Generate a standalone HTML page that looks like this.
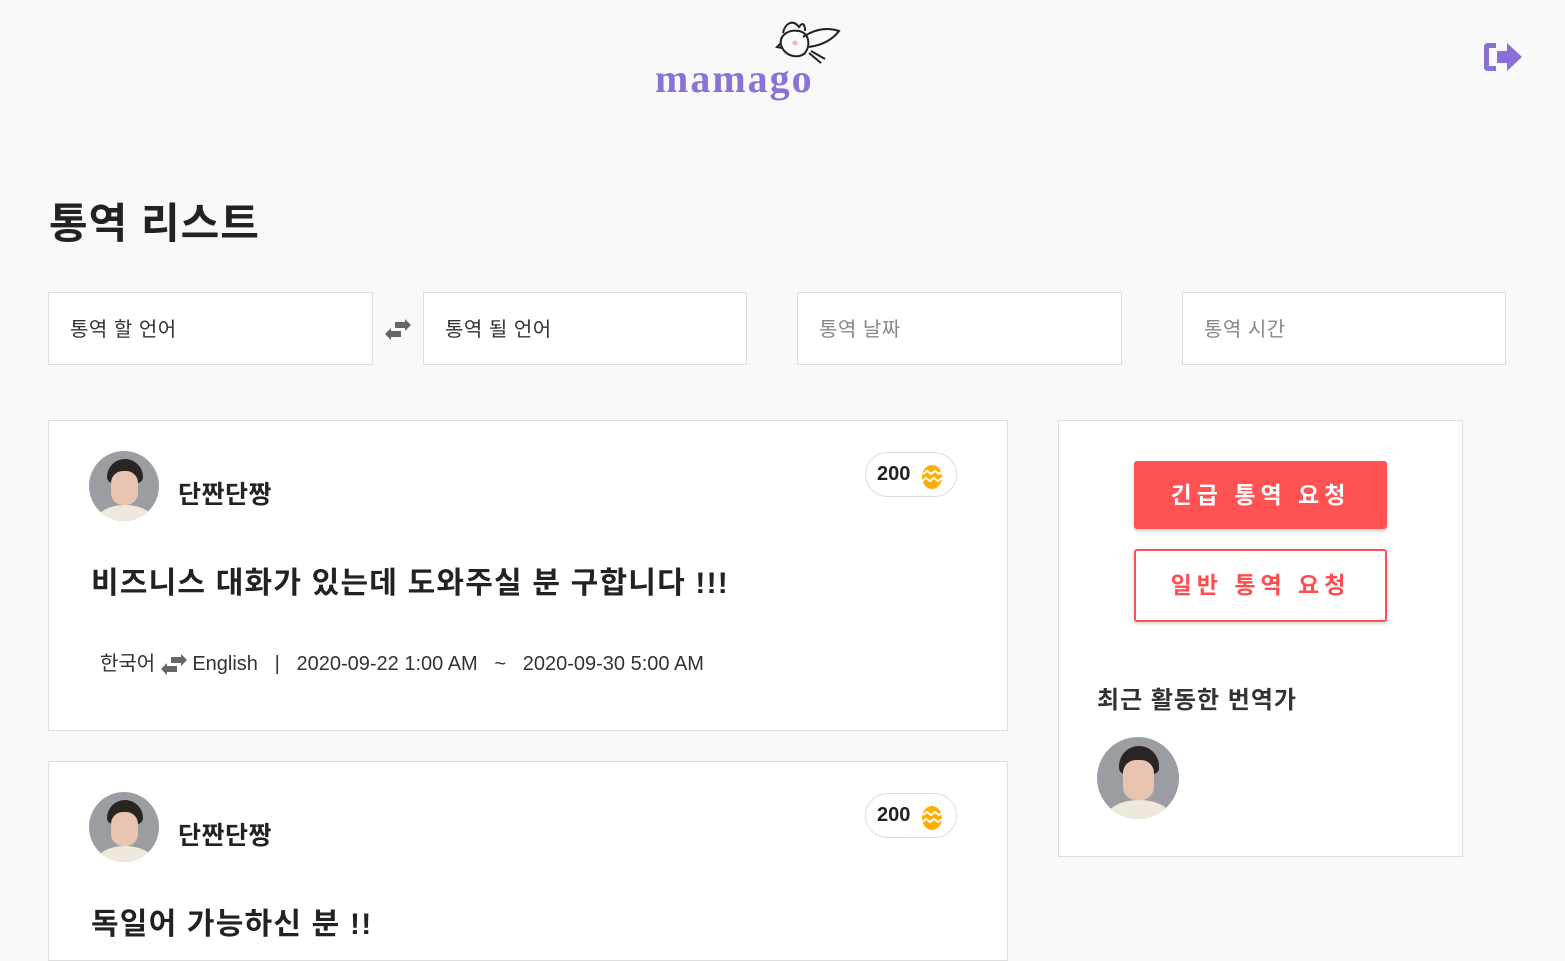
<!DOCTYPE html>
<html><head><meta charset="utf-8"><style>
*{box-sizing:border-box;margin:0;padding:0}
body{width:1565px;height:931px;overflow:hidden;background:#f9f9f9;font-family:"Liberation Sans","Noto Sans CJK KR",sans-serif;color:#222;position:relative}
.abs{position:absolute}
.inp{position:absolute;top:292px;height:73px;background:#fff;border:1px solid #ddd;font-size:20px;padding:20px 21px;color:#333;letter-spacing:.5px}
.card{position:absolute;left:48px;width:960px;background:#fff;border:1px solid #ddd}
.av{position:absolute;width:70px;height:70px;border-radius:50%;background:#9a9ea3;overflow:hidden}
.name{position:absolute;font-size:25px;font-weight:bold;letter-spacing:.5px}
.badge{position:absolute;width:92px;height:45px;border:1px solid #ddd;border-radius:23px;font-size:20px;font-weight:bold;padding:10px 0 0 11px;background:#fff}
.badge svg{position:absolute;left:55px;top:10px}
.btn{position:absolute;left:1134px;width:253px;font-size:23px;font-weight:bold;letter-spacing:5px;text-align:center;border-radius:3px}
</style></head><body>
<div class="abs" style="left:655px;top:55px;font-family:'Liberation Serif',serif;font-size:40px;color:#8a72d6;letter-spacing:2px;font-weight:bold">mamago</div>
<svg class="abs" style="left:775px;top:15px" width="70" height="62" viewBox="0 0 70 62" fill="none" stroke="#222" stroke-width="2">
<path d="M8 18 C10 8 18 4 24 12 C28 6 30 10 30 16"/>
<path d="M6 30 C4 20 14 14 24 16 C34 18 36 30 30 38 C24 44 10 42 6 30Z"/>
<path d="M28 22 C40 14 52 12 64 16 C58 24 48 30 34 32"/>
<path d="M34 38 L46 48 M36 36 L50 44"/><circle cx="20" cy="28" r="2.5" fill="#f7b0b8" stroke="none"/>
<path d="M6 28 L2 32 L7 33"/></svg>
<svg class="abs" style="left:1482px;top:40px" width="42" height="34" viewBox="0 0 42 34"><path d="M14 3 H6 Q2 3 2 7 V27 Q2 31 6 31 H14 V26 H7 V8 H14Z" fill="#8a6fd6"/><path d="M15 11 H25 V3 L40 17 L25 31 V23 H15Z" fill="#8a6fd6"/></svg>
<div class="abs" style="left:49px;top:190px;font-size:42px;font-weight:bold;color:#222;letter-spacing:1px">통역 리스트</div>
<div class="inp" style="left:48px;width:325px">통역 할 언어</div>
<svg class="abs" style="left:385px;top:318px" width="26" height="22" viewBox="0 0 26 22" fill="#666"><path d="M10 2 H20 V-1 L26 5 L20 11 V8 H10Z" transform="translate(0,2)"/><path d="M16 13 H6 V10 L0 16 L6 22 V19 H16Z"/></svg>
<div class="inp" style="left:423px;width:324px">통역 될 언어</div>
<div class="inp" style="left:797px;width:325px;color:#888">통역 날짜</div>
<div class="inp" style="left:1182px;width:324px;color:#888">통역 시간</div>

<div class="card" style="top:420px;height:311px">
<div class="av" style="left:40px;top:30px"><div style="position:absolute;left:18px;top:8px;width:36px;height:24px;background:#2a2422;border-radius:18px 18px 6px 6px"></div><div style="position:absolute;left:22px;top:20px;width:27px;height:34px;background:#e8c3b0;border-radius:12px"></div><div style="position:absolute;left:8px;top:54px;width:56px;height:30px;background:#efe8dc;border-radius:50%"></div></div>
<div class="name" style="left:129px;top:54px">단짠단짱</div>
<div class="badge" style="left:816px;top:31px">200<svg width="22" height="26" viewBox="0 0 22 26"><ellipse cx="11" cy="14" rx="10" ry="12" fill="#ffae00"/><path d="M2 11 L6 8 L10 11 L14 8 L18 11 L21 9 M1 18 L5 15 L9 18 L13 15 L17 18 L21 15" stroke="#fff" stroke-width="2" fill="none"/></svg></div>
<div class="abs" style="left:42px;top:137px;font-size:30px;font-weight:bold;letter-spacing:1.2px">비즈니스 대화가 있는데 도와주실 분 구합니다 !!!</div>
<div class="abs" style="left:51px;top:226px;font-size:20px;color:#333;white-space:pre">한국어 <svg width="26" height="22" viewBox="0 0 26 22" fill="#666" style="vertical-align:-5px"><path d="M10 4 H20 V1 L26 7 L20 13 V10 H10Z"/><path d="M16 13 H6 V10 L0 16 L6 22 V19 H16Z"/></svg> English   |   2020-09-22 1:00 AM   ~   2020-09-30 5:00 AM</div>
</div>

<div class="card" style="top:761px;height:200px">
<div class="av" style="left:40px;top:30px"><div style="position:absolute;left:18px;top:8px;width:36px;height:24px;background:#2a2422;border-radius:18px 18px 6px 6px"></div><div style="position:absolute;left:22px;top:20px;width:27px;height:34px;background:#e8c3b0;border-radius:12px"></div><div style="position:absolute;left:8px;top:54px;width:56px;height:30px;background:#efe8dc;border-radius:50%"></div></div>
<div class="name" style="left:129px;top:54px">단짠단짱</div>
<div class="badge" style="left:816px;top:31px">200<svg width="22" height="26" viewBox="0 0 22 26"><ellipse cx="11" cy="14" rx="10" ry="12" fill="#ffae00"/><path d="M2 11 L6 8 L10 11 L14 8 L18 11 L21 9 M1 18 L5 15 L9 18 L13 15 L17 18 L21 15" stroke="#fff" stroke-width="2" fill="none"/></svg></div>
<div class="abs" style="left:42px;top:137px;font-size:30px;font-weight:bold;letter-spacing:1.2px">독일어 가능하신 분 !!</div>
</div>

<div class="abs" style="left:1058px;top:420px;width:405px;height:437px;background:#fff;border:1px solid #ddd"></div>
<div class="btn" style="top:461px;height:68px;background:#ff5252;color:#fff;line-height:68px;box-shadow:0 2px 3px rgba(0,0,0,.2)">긴급 통역 요청</div>
<div class="btn" style="top:549px;height:73px;background:#fff;color:#ff4c4c;border:2px solid #ff5252;line-height:69px;box-shadow:0 2px 3px rgba(0,0,0,.15)">일반 통역 요청</div>
<div class="abs" style="left:1097px;top:680px;font-size:24px;font-weight:bold;color:#333;letter-spacing:1px">최근 활동한 번역가</div>
<div class="av" style="left:1097px;top:737px;width:82px;height:82px"><div style="position:absolute;left:22px;top:9px;width:40px;height:28px;background:#2a2422;border-radius:20px 20px 6px 6px"></div><div style="position:absolute;left:26px;top:23px;width:31px;height:40px;background:#e8c3b0;border-radius:13px"></div><div style="position:absolute;left:10px;top:63px;width:64px;height:34px;background:#efe8dc;border-radius:50%"></div></div>
</body></html>
